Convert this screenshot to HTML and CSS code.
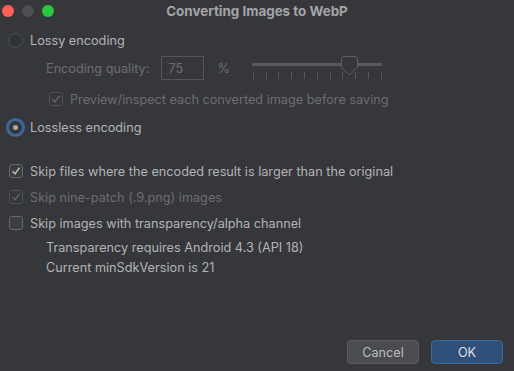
FILE: index.html
```html
<!DOCTYPE html>
<html lang="en">
<head>
    <meta charset="UTF-8">
    <title>Converting Images to WebP</title>
    <link rel="stylesheet" href="styles.css">
</head>
<body>
    <div class="titlebar">
        <div class="lights">
            <span class="light red"></span>
            <span class="light gray"></span>
            <span class="light green"></span>
        </div>
        <div class="title">Converting Images to WebP</div>
    </div>

    <div class="content">
        <div class="row lossy">
            <span class="radio"></span>
            <span class="label">Lossy encoding</span>
        </div>

        <div class="row quality disabled">
            <span class="label">Encoding quality:</span>
            <span class="field">75</span>
            <span class="percent">%</span>
            <div class="slider">
                <div class="track"></div>
                <svg class="thumb" width="17" height="20" viewBox="0 0 17 20">
                    <path d="M2.5 0.5 H14.5 Q16.5 0.5 16.5 2.5 V11 L8.5 19 L0.5 11 V2.5 Q0.5 0.5 2.5 0.5 Z" fill="#36373a" stroke="#5e6063"/>
                </svg>
                <div class="ticks">
                    <i></i><i></i><i></i><i></i><i></i><i></i><i></i><i></i><i></i><i></i><i></i>
                </div>
            </div>
        </div>

        <div class="row preview disabled">
            <svg class="check" width="14" height="14" viewBox="0 0 14 14">
                <rect x="0.5" y="0.5" width="13" height="13" rx="2.5" fill="#36373a" stroke="#505255"/>
                <polyline points="3.5,7.3 6,9.8 10.5,3.8" fill="none" stroke="#66686b" stroke-width="1.4"/>
            </svg>
            <span class="label">Preview/inspect each converted image before saving</span>
        </div>

        <div class="row lossless">
            <span class="radio selected"><span class="dot"></span></span>
            <span class="label">Lossless encoding</span>
        </div>

        <div class="row skip first">
            <svg class="check" width="14" height="14" viewBox="0 0 14 14">
                <rect x="0.5" y="0.5" width="13" height="13" rx="2.5" fill="#3b3d40" stroke="#66686b"/>
                <polyline points="3.5,7.3 6,9.8 10.5,3.8" fill="none" stroke="#b4b6b9" stroke-width="1.5"/>
            </svg>
            <span class="label">Skip files where the encoded result is larger than the original</span>
        </div>

        <div class="row skip disabled">
            <svg class="check" width="14" height="14" viewBox="0 0 14 14">
                <rect x="0.5" y="0.5" width="13" height="13" rx="2.5" fill="#36373a" stroke="#505255"/>
                <polyline points="3.5,7.3 6,9.8 10.5,3.8" fill="none" stroke="#66686b" stroke-width="1.4"/>
            </svg>
            <span class="label">Skip nine-patch (.9.png) images</span>
        </div>

        <div class="row skip">
            <svg class="check" width="14" height="14" viewBox="0 0 14 14">
                <rect x="0.5" y="0.5" width="13" height="13" rx="2.5" fill="#3b3d40" stroke="#66686b"/>
            </svg>
            <span class="label">Skip images with transparency/alpha channel</span>
        </div>

        <div class="note first">Transparency requires Android 4.3 (API 18)</div>
        <div class="note">Current minSdkVersion is 21</div>
    </div>

    <div class="footer">
        <button class="btn">Cancel</button>
        <button class="btn primary">OK</button>
    </div>
</body>
</html>
```

FILE: styles.css
```css
* {
    margin: 0;
    padding: 0;
    box-sizing: border-box;
}

body {
    width: 514px;
    height: 371px;
    background: #36373a;
    color: #b2b4b7;
    font-family: Inter, "Liberation Sans", Arial, sans-serif;
    font-size: 12.7px;
    display: flex;
    flex-direction: column;
    overflow: hidden;
}

/* Title bar */
.titlebar {
    position: relative;
    height: 22px;
    display: flex;
    align-items: center;
    justify-content: center;
}

.lights {
    position: absolute;
    left: 2px;
    top: 5px;
    display: flex;
    gap: 8px;
}

.light {
    width: 12px;
    height: 12px;
    border-radius: 50%;
}

.red { background: #fe5f57; }
.gray { background: #4e4f52; }
.green { background: #29c840; }

.title {
    font-weight: 700;
    font-size: 13.4px;
    color: #a3a5a8;
    margin-top: -1px;
}

/* Content rows */
.content {
    display: flex;
    flex-direction: column;
}

.row {
    height: 26px;
    display: flex;
    align-items: center;
}

.disabled .label,
.disabled .percent,
.disabled .field {
    color: #6c6e71;
}

.lossy {
    margin-top: 5px;
    padding-left: 8px;
}

.radio {
    width: 15px;
    height: 15px;
    border-radius: 50%;
    border: 1px solid #4d5053;
    background: #303335;
    margin-right: 7px;
    display: flex;
    align-items: center;
    justify-content: center;
}

.radio.selected {
    width: 19px;
    height: 19px;
    border: 3px solid #3d6899;
    background: #34363a;
    margin-left: -2px;
    margin-right: 5px;
}

.dot {
    width: 5px;
    height: 5px;
    border-radius: 50%;
    background: #a9abae;
}

.quality {
    margin-top: 2px;
    padding-left: 46px;
}

.field {
    width: 43px;
    height: 24px;
    border: 1px solid #545659;
    margin-left: 12px;
    padding-left: 6px;
    display: flex;
    align-items: center;
}

.percent {
    margin-left: 13px;
}

.slider {
    position: relative;
    width: 130px;
    height: 26px;
    margin-left: 22px;
}

.track {
    position: absolute;
    left: 0;
    right: 0;
    top: 8px;
    height: 3px;
    background: #58595c;
    border-radius: 1px;
}

.thumb {
    position: absolute;
    left: 89px;
    top: 1px;
}

.ticks {
    position: absolute;
    left: 1px;
    right: 0;
    top: 17px;
    display: flex;
    justify-content: space-between;
}

.ticks i {
    width: 1px;
    height: 7px;
    background: #58595c;
}

.preview {
    margin-top: 5px;
    padding-left: 49px;
}

.check {
    margin-right: 7px;
    flex: none;
}

.lossless {
    margin-top: 2px;
    padding-left: 8px;
}

.skip {
    padding-left: 9px;
}

.skip.first {
    margin-top: 18px;
}

.note {
    height: 20px;
    line-height: 20px;
    padding-left: 46px;
}

.note.first {
    margin-top: 2px;
}

/* Footer buttons */
.footer {
    margin-top: auto;
    padding: 0 11px 7px 0;
    display: flex;
    justify-content: flex-end;
    gap: 12px;
}

.btn {
    width: 72px;
    height: 24px;
    border-radius: 4px;
    border: 1px solid #5a5c5f;
    background: #4a4c4f;
    color: #b9bbbe;
    font-family: inherit;
    font-size: 12.7px;
}

.btn.primary {
    border-color: #3e6697;
    background: #2f5079;
    color: #dfe1e4;
}
```
